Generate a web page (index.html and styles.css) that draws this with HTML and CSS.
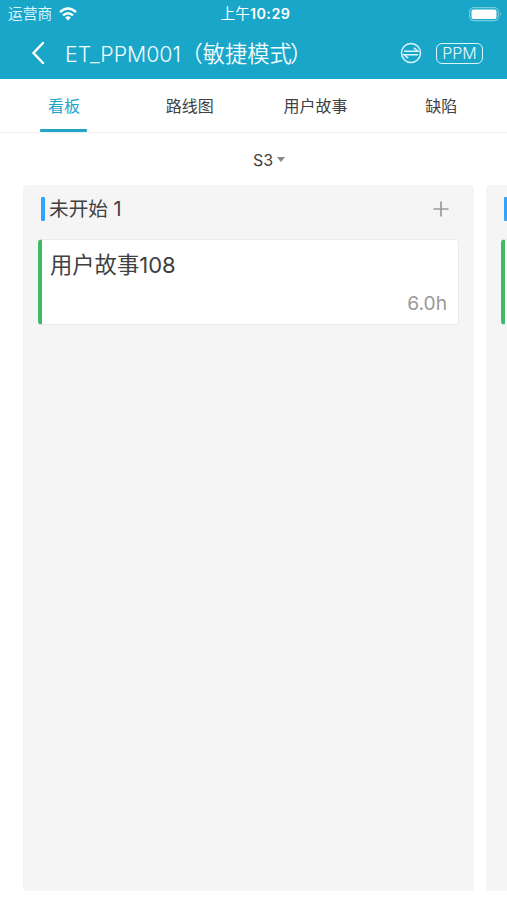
FILE: index.html
```html
<!DOCTYPE html>
<html lang="zh-CN">
<head>
<meta charset="utf-8">
<title>ET_PPM001</title>
<link rel="stylesheet" href="styles.css">
</head>
<body>
<div class="app">
  <header class="header">
    <div class="status">
      <div class="carrier"><span>运营商</span>
        <svg class="wifi" width="18" height="14" viewBox="0 0 18 14"><g fill="none" stroke="#fff" stroke-width="2.4"><path d="M1 5.2Q9-2 17 5.2"/><path d="M4 8.4Q9 3.9 14 8.4"/></g><path d="M6.1 10.5Q9 8.1 11.9 10.5L9 13.4Z" fill="#fff"/></svg>
      </div>
      <div class="clock">上午<b>10:29</b></div>
      <svg class="battery" width="33" height="15" viewBox="0 0 33 15"><rect x=".7" y=".7" width="28.6" height="13" rx="4" fill="none" stroke="#75cbdf" stroke-width="1.2"/><rect x="2.5" y="2.5" width="25" height="9.5" rx="2" fill="#fff"/><path d="M30.8 5.2Q33 7.2 30.8 9.2Z" fill="#75cbdf"/></svg>
    </div>
    <div class="nav">
      <svg class="back" width="14" height="24" viewBox="0 0 14 24"><path d="M12 2L2.5 12L12 22" fill="none" stroke="#fff" stroke-width="2.5" stroke-linecap="round"/></svg>
      <h1 class="title"><span class="code">ET_PPM001</span><span class="mode">（敏捷模式<span class="close">）</span></span></h1>
      <svg class="swap" width="22" height="22" viewBox="0 0 22 22"><g fill="none" stroke="#d8f5fa" stroke-width="1.5"><circle cx="11" cy="11" r="9.5"/><path d="M4 9.2H18L13.8 5.8M18 12.8H4L8.2 16.2"/></g></svg>
      <div class="badge">PPM</div>
    </div>
  </header>
  <nav class="tabs">
    <div class="tab active">看板</div>
    <div class="tab">路线图</div>
    <div class="tab">用户故事</div>
    <div class="tab">缺陷</div>
  </nav>
  <div class="sprint"><span>S3</span><i class="caret"></i></div>
  <main class="board">
    <section class="column">
      <div class="column-head"><i class="mark"></i><h2>未开始 <span class="count">1</span></h2>
        <svg class="add" width="16" height="16" viewBox="0 0 16 16"><path d="M8 .5V15.5M.5 8H15.5" stroke="#999" stroke-width="1.7"/></svg>
      </div>
      <article class="card"><h3>用户故事<span class="num">108</span></h3><div class="hours">6.0h</div></article>
    </section>
    <section class="column">
      <div class="column-head"><i class="mark"></i></div>
      <article class="card"></article>
    </section>
  </main>
</div>
</body>
</html>
```
FILE: styles.css
```css
* { box-sizing: border-box; }
body { margin: 0; background: #fff; color: #414141; font-family: Inter, "Noto Sans CJK SC", sans-serif; }
h1, h2, h3 { margin: 0; font-weight: 400; }
svg { display: block; flex: none; }
.app { width: 507px; height: 900px; overflow: hidden; display: flex; flex-direction: column; }
.header { height: 79px; background: #1aa6c9; color: #fff; flex: none; }
.status { height: 27px; display: grid; grid-template-columns: 1fr auto 1fr; align-items: center; padding: 0 5px 0 8px; font-size: 14.7px; line-height: 27px; }
.carrier { display: flex; align-items: center; gap: 7px; color: #d8f5fa; }
.carrier span { padding-top: 1px; }
.clock { font-size: 14.7px; font-weight: 400; padding-left: 1px; }
.clock b { font-size: 14.3px; font-weight: 600; letter-spacing: .5px; }
.battery { justify-self: end; }
.nav { height: 52px; display: flex; align-items: center; padding: 0 24px 0 31px; }
.title { flex: 1; display: flex; margin-left: 20px; font-size: 22.3px; line-height: 56px; height: 54px; font-weight: 350; white-space: nowrap; color: #effcff; }
.code { font-size: 21.3px; }
.mode { margin-left: -.5px; }
.close { margin-left: -2px; }
.swap { margin-right: 14px; }
.badge { width: 47px; height: 21px; border: 1.5px solid #d8f5fa; border-radius: 6px; font-size: 16px; line-height: 18px; text-align: center; font-weight: 300; color: #e4f9fc; }
.tabs { height: 54px; flex: none; display: grid; grid-template-columns: repeat(4, 125.8px); border-bottom: 1px solid #f0f0f0; font-size: 16px; line-height: 55px; text-align: center; padding-left: 1px; }
.tab { position: relative; height: 53px; }
.active { color: #1aa6c9; }
.active::after { content: ""; position: absolute; left: 39px; bottom: 0; width: 47px; height: 3px; border-radius: 1px; background: #22a6c8; }
.sprint { height: 52px; flex: none; display: flex; align-items: center; justify-content: center; gap: 4px; padding-left: 31px; padding-top: 1px; font-size: 16px; }
.caret { border: 4px solid transparent; border-top: 5px solid #888; border-bottom: 0; }
.board { display: flex; gap: 12px; padding-left: 23px; height: 706px; flex: none; }
.column { width: 451px; flex: none; background: #f5f5f5; border-radius: 4px; padding: 0 15px; }
.column-head { height: 54px; display: flex; align-items: center; padding: 0 10px 6px 3px; }
.mark { width: 4px; height: 24px; border-radius: 1px; background: #36a3f7; }
.column-head h2 { flex: 1; margin-left: 4px; font-size: 19.7px; line-height: 50px; }
.count { margin-left: 0; }
.card { height: 86px; background: #fff; border: 1px solid #ebebeb; border-left: 4px solid #42b968; border-radius: 4px; padding: 0 11px 0 8px; }
.card h3 { font-size: 22.3px; line-height: 49px; height: 49px; }
.num { font-size: 22px; }
.hours { text-align: right; font-size: 19.2px; line-height: 29px; color: #999; }
```
